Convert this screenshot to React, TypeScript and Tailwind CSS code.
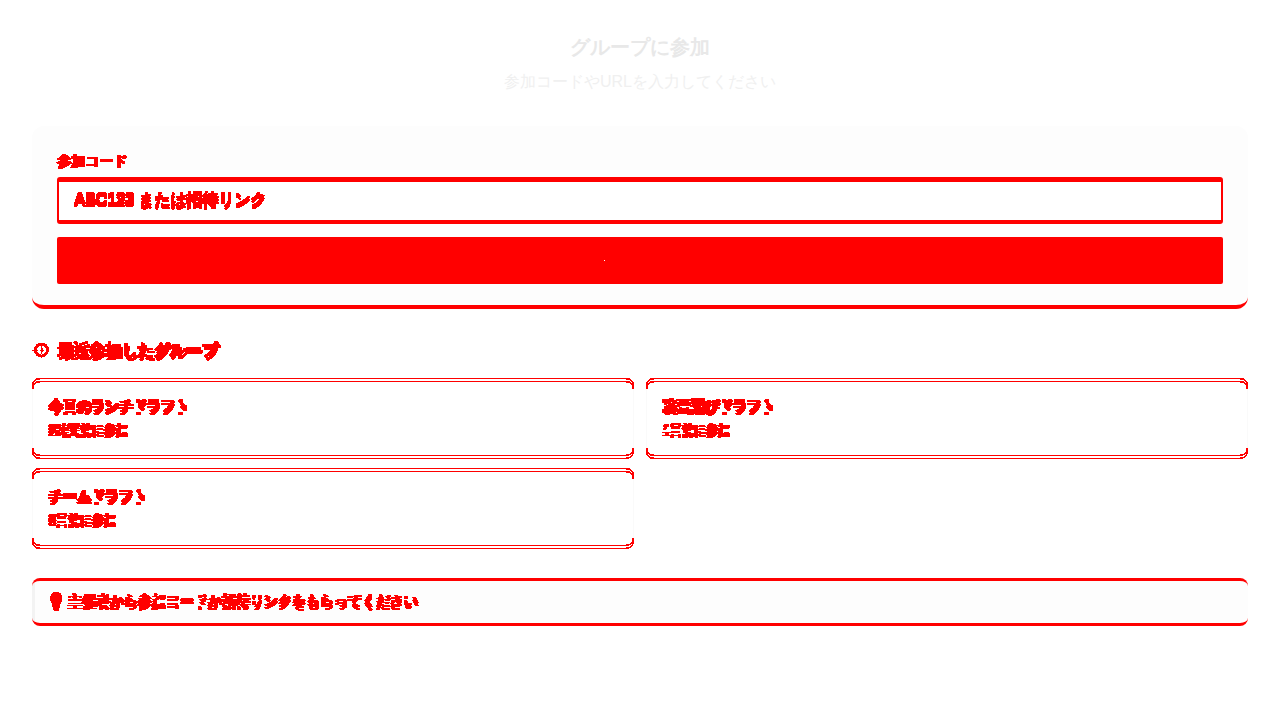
const groups = [
  { name: "今日のランチドラフト", joined: "2時間前に参加" },
  { name: "映画選びドラフト", joined: "1日前に参加" },
  { name: "チームドラフト", joined: "3日前に参加" },
];

const OPAQUE_STEPS = "0 1 1 1 1 1 1 1 1 1 1 1 1 1 1 1 1 1";

function EdgeFilter({ id, dx = 0, dy, left = 0, right = 0 }: { id: string; dx?: number; dy: number; left?: number; right?: number }) {
  return (
    <filter id={id} x="-10%" y="-20%" width="120%" height="150%" colorInterpolationFilters="sRGB">
      <feOffset in="SourceAlpha" dx={dx} dy={dy} result="moved" />
      <feComposite in="SourceAlpha" in2="moved" operator="arithmetic" k2="1" k3="-1" result="above" />
      <feComposite in="moved" in2="SourceAlpha" operator="arithmetic" k2="1" k3="-1" result="below" />
      <feMerge result="both">
        <feMergeNode in="above" />
        <feMergeNode in="below" />
      </feMerge>
      <feOffset in="both" dx={-left} result="west" />
      <feOffset in="both" dx={right} result="east" />
      <feMerge result="wide">
        <feMergeNode in="both" />
        <feMergeNode in="west" />
        <feMergeNode in="east" />
      </feMerge>
      <feComponentTransfer in="wide" result="mask">
        <feFuncA type="discrete" tableValues={OPAQUE_STEPS} />
      </feComponentTransfer>
      <feFlood floodColor="#ff0000" />
      <feComposite in2="mask" operator="in" result="red" />
      <feComponentTransfer in="SourceAlpha" result="ghost">
        <feFuncA type="linear" slope="0.02" />
      </feComponentTransfer>
      <feMerge>
        <feMergeNode in="ghost" />
        <feMergeNode in="red" />
      </feMerge>
    </filter>
  );
}

function SolidFilter({ id, dy, spread }: { id: string; dy: number; spread: number }) {
  return (
    <filter id={id} x="-10%" y="-20%" width="120%" height="150%" colorInterpolationFilters="sRGB">
      <feOffset in="SourceAlpha" dx={spread} dy={dy} result="moved" />
      <feOffset in="SourceAlpha" dy={dy} result="below" />
      <feOffset in="SourceAlpha" dy={dy / 3} result="middle" />
      <feOffset in="SourceAlpha" dx={spread} result="side" />
      <feMerge result="both">
        <feMergeNode in="SourceAlpha" />
        <feMergeNode in="side" />
        <feMergeNode in="middle" />
        <feMergeNode in="moved" />
        <feMergeNode in="below" />
      </feMerge>
      <feComponentTransfer in="both" result="mask">
        <feFuncA type="discrete" tableValues={OPAQUE_STEPS} />
      </feComponentTransfer>
      <feFlood floodColor="#ff0000" />
      <feComposite in2="mask" operator="in" />
    </filter>
  );
}

function ClockMark() {
  return (
    <svg width="17" height="18" viewBox="0 0 17 18" fill="none" stroke="#ff0000" shapeRendering="crispEdges">
      <circle cx="9.5" cy="9" r="6" strokeWidth="3" />
      <path d="M9.5 5v8M8 9h4" strokeWidth="1" />
      <path d="M10.5 7v4" strokeWidth="1" />
      <path d="M0 9h6M2 7h3M2 11h3" strokeWidth="1" />
    </svg>
  );
}

export default function App() {
  return (
    <div lang="ja" className="h-[720px] overflow-hidden bg-white px-8 pt-8 font-['Liberation_Sans',sans-serif] text-black">
      <svg width="0" height="0" className="absolute" aria-hidden="true">
        <defs>
          <EdgeFilter id="box" dy={3} />
          <EdgeFilter id="edge3" dy={3} left={1} right={1} />
          <EdgeFilter id="title" dy={3} left={1} right={1} />
          <EdgeFilter id="heading" dx={2} dy={3} right={1} />
          <SolidFilter id="solid0" dy={0} spread={0.5} />
          <SolidFilter id="solid3" dy={3} spread={1} />
        </defs>
      </svg>

      <header className="h-[94px] text-center">
        <h1 className="text-xl leading-[30px] font-bold text-[#e8e8e8]">グループに参加</h1>
        <p className="mt-2 text-base leading-6 text-[#f0f0f0]">参加コードやURLを入力してください</p>
      </header>

      <section className="h-[183px] rounded-xl border-b-4 border-[#ff0000] bg-[#fdfdfd] px-[25px] pt-[25px]">
        <label className="block h-[26px] text-sm leading-5 font-bold [filter:url(#solid0)]">参加コード</label>
        <div className="flex h-[47px] items-center rounded-[3px] border-x-2 border-t-[5px] border-b-4 border-[#ff0000] bg-white pl-[15px]">
          <span className="-translate-y-[2px] text-base leading-6 [filter:url(#solid3)]">ABC123 または招待リンク</span>
        </div>
        <div className="mt-[13px] flex h-[47px] rounded-[2px] bg-[#ff0000]">
          <span className="mt-[23px] ml-[547px] size-px bg-white" />
        </div>
      </section>

      <h2 className="mt-[29px] flex h-6 items-center gap-2 text-base leading-6 font-bold">
        <ClockMark />
        <span className="[filter:url(#heading)]">最近参加したグループ</span>
      </h2>

      <div className="mt-4 grid grid-cols-2 gap-3">
        {groups.map((group) => (
          <div key={group.name} className="grid h-[78px]">
            <div className="col-start-1 row-start-1 rounded-lg border border-black [filter:url(#box)]" />
            <div className="col-start-1 row-start-1 px-[17px] pt-[17px]">
              <div className="text-sm leading-[21px] font-bold [filter:url(#title)]">{group.name}</div>
              <div className="mt-1 text-xs leading-[18px] [filter:url(#edge3)]">{group.joined}</div>
            </div>
          </div>
        ))}
      </div>

      <div className="mt-[32px] flex h-12 items-center rounded-lg border-y-[3px] border-[#ff0000] bg-[linear-gradient(to_right,#f3f3f3_3px,#fdfdfd_3px)] pl-[17px] text-sm leading-[21px]">
        <span className="w-[19px] -translate-x-[2px] -translate-y-[2px] [filter:url(#solid3)]">💡</span>
        <span className="-translate-y-[2px] [filter:url(#edge3)]">主催者から参加コードか招待リンクをもらってください</span>
      </div>
    </div>
  );
}
